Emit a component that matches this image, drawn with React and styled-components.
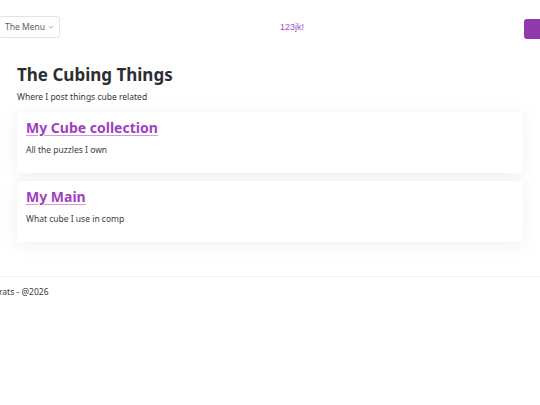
import styled, { createGlobalStyle } from "styled-components";

const GlobalStyle = createGlobalStyle`
  html, body {
    margin: 0;
    padding: 0;
    background: #ffffff;
    overflow: hidden;
  }
  body {
    font-family: "Noto Sans", "Open Sans", sans-serif;
    color: #2b2f33;
  }
`;

const posts = [
  { id: 1, title: "My Cube collection", text: "All the puzzles I own" },
  { id: 2, title: "My Main", text: "What cube I use in comp" },
];

export default function App() {
  return (
    <>
      <GlobalStyle />
      <Page>
        <Header>
          <MenuButton>
            The Menu
            <Chevron viewBox="0 0 10 10">
              <path d="M2.5 4l2.5 2.5L7.5 4" />
            </Chevron>
          </MenuButton>
          <Tagline>123jk!</Tagline>
          <ProfileButton />
        </Header>

        <Main>
          <Title>The Cubing Things</Title>
          <Subtitle>Where I post things cube related</Subtitle>
          <Cards>
            {posts.map((p) => (
              <Card key={p.id}>
                <CardLink href="#">{p.title}</CardLink>
                <CardText>{p.text}</CardText>
              </Card>
            ))}
          </Cards>
        </Main>

        <Footer>rats - @2026</Footer>
      </Page>
    </>
  );
}

const Page = styled.div`
  width: 100%;
  min-height: 405px;
`;

const Header = styled.header`
  display: flex;
  justify-content: space-between;
  align-items: center;
  padding-top: 16px;
  height: 21px;
`;

const MenuButton = styled.button`
  display: flex;
  align-items: center;
  gap: 2px;
  height: 22px;
  margin-left: -1px;
  padding: 0 4px 0 5px;
  background: #fff;
  border: 1px solid #e3e4e8;
  border-radius: 3px;
  font-family: "Noto Sans", sans-serif;
  font-size: 8.5px;
  color: #5c6168;
`;

const Chevron = styled.svg`
  width: 8px;
  height: 8px;
  fill: none;
  stroke: #8a8f96;
  stroke-width: 1;
`;

const Tagline = styled.span`
  font-family: "Liberation Sans", Arial, sans-serif;
  font-size: 9px;
  color: #a450c8;
`;

const ProfileButton = styled.button`
  width: 20px;
  height: 20px;
  margin-right: -4px;
  margin-top: 4px;
  border: none;
  border-radius: 3px;
  background: #8e3aad;
`;

const Main = styled.main`
  padding: 27px 17px 34px;
`;

const Title = styled.h1`
  margin: 0;
  font-size: 17px;
  font-weight: 700;
  line-height: 22px;
  color: #2a2e33;
`;

const Subtitle = styled.p`
  margin: 5px 0 0;
  font-size: 8.5px;
  line-height: 12px;
  color: #33373c;
`;

const Cards = styled.div`
  display: flex;
  flex-direction: column;
  gap: 8px;
  margin-top: 9px;
`;

const Card = styled.div`
  background: #fff;
  border-radius: 3px;
  padding: 4px 9px 18px;
  height: 39px;
  box-shadow: 0 3px 16px rgba(40, 40, 90, 0.07);
`;

const CardLink = styled.a`
  display: inline-block;
  font-size: 14px;
  font-weight: 700;
  line-height: 18px;
  color: #a03fbe;
  text-decoration: underline;
  text-decoration-color: #d49ae6;
  text-underline-offset: 2px;
`;

const CardText = styled.p`
  margin: 6px 0 0;
  font-size: 8.5px;
  line-height: 12px;
  color: #3a3e44;
`;

const Footer = styled.footer`
  border-top: 1px solid #f0f0f3;
  padding-top: 9px;
  margin-left: -1px;
  font-size: 8.5px;
  line-height: 12px;
  color: #33373c;
`;
